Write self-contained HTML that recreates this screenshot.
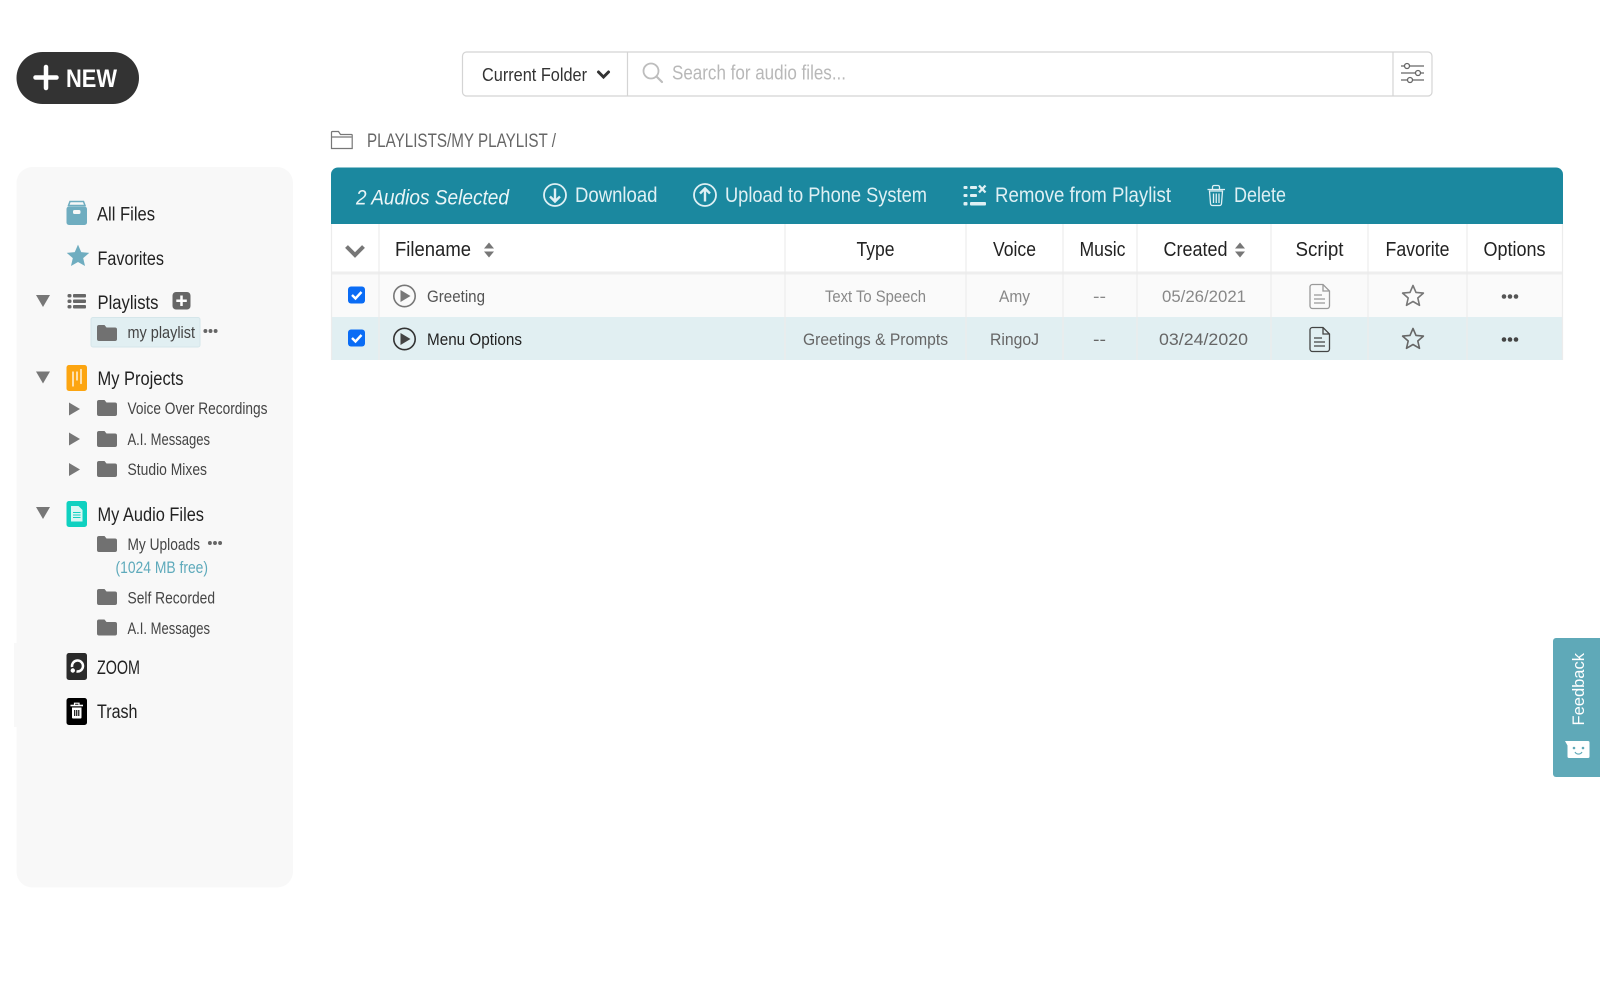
<!DOCTYPE html>
<html lang="en"><head><meta charset="utf-8"><title>Playlists</title>
<style>
html,body{margin:0;padding:0;background:#fff;width:1600px;height:993px;overflow:hidden}
svg{display:block;filter:blur(.35px)}
text{font-family:"Liberation Sans",sans-serif;font-size:19px;fill:#222;white-space:pre}
.s{font-size:16.5px;fill:#444}
.h{font-size:20px;fill:#222}
.b{font-size:21px;fill:#dff0f4}
.c{font-size:17px;fill:#888}
.d{font-size:17px;fill:#666}
</style></head><body>
<svg width="1600" height="993" viewBox="0 0 1600 993" xmlns="http://www.w3.org/2000/svg">
<defs>
<path id="fo" d="M0 2a2 2 0 0 1 2-2h5.500l2 2.500H18a2 2 0 0 1 2 2V14a2 2 0 0 1-2 2H2a2 2 0 0 1-2-2z" fill="#717171"/>
<path id="td" d="M0 0h14L7 12z" fill="#777"/>
<path id="tr" d="M0 0l11 6.500L0 13z" fill="#777"/>
<g id="dots"><circle cx="-6" cy="0" r="2.300"/><circle cx="0" cy="0" r="2.300"/><circle cx="6" cy="0" r="2.300"/></g>
<path id="star" d="M0-10.500l3 6.900 7.400.7-5.600 4.900 1.700 7.300L0 5.500l-6.500 3.800 1.700-7.300-5.600-4.900 7.400-.7z" fill="none" stroke-width="1.600" stroke-linejoin="round"/>
<path id="sort" d="M-5-1.500L0-7.500l5 6zM-5 1.500L0 7.500l5-6z" fill="#777"/>
</defs>

<!-- new button -->
<rect x="16.500" y="52" width="122.500" height="52" rx="26" fill="#333"/>
<path d="M46 67v21M35.500 77.500h21" stroke="#fff" stroke-width="4.500" stroke-linecap="round"/>
<text x="66" y="87" style="font-size:25px;font-weight:700;fill:#fff" textLength="51" lengthAdjust="spacingAndGlyphs">NEW</text>

<!-- sidebar -->
<rect x="16.500" y="167" width="276.500" height="720.500" rx="16" fill="#f8f8f8"/>
<rect x="14" y="643" width="10" height="84" fill="#f8f8f8"/>

<path d="M70 201.500h13.500l1.500 4H68.500z" fill="none" stroke="#6fadc0" stroke-width="1.500"/>
<rect x="66.500" y="206.500" width="20.500" height="18.500" rx="2.500" fill="#6fadc0"/>
<rect x="73" y="210" width="7.500" height="4" rx="1.500" fill="#f8f8f8"/>
<text x="97" y="220.500" textLength="58" lengthAdjust="spacingAndGlyphs">All Files</text>

<path transform="translate(78 256) scale(1.080)" d="M0-10.500l3 6.900 7.400.7-5.600 4.900 1.700 7.300L0 5.500l-6.500 3.800 1.700-7.300-5.600-4.900 7.400-.7z" fill="#6fadc0"/>
<text x="97.500" y="265" textLength="66.500" lengthAdjust="spacingAndGlyphs">Favorites</text>

<use href="#td" x="36" y="295"/>
<g fill="#666"><rect x="67.500" y="294" width="4" height="3.500" rx="1.500"/><rect x="67.500" y="299.500" width="4" height="3.500" rx="1.500"/><rect x="67.500" y="305" width="4" height="3.500" rx="1.500"/><rect x="73" y="294" width="13" height="3.500" rx="1"/><rect x="73" y="299.500" width="13" height="3.500" rx="1"/><rect x="73" y="305" width="13" height="3.500" rx="1"/></g>
<text x="97.500" y="309" textLength="61" lengthAdjust="spacingAndGlyphs">Playlists</text>
<rect x="172.500" y="292" width="18" height="17.500" rx="3.500" fill="#666"/>
<path d="M181.500 295.500v10.500M176.300 300.700h10.500" stroke="#fff" stroke-width="2.500"/>

<rect x="91" y="317.500" width="109" height="29.500" rx="2" fill="#e1eff2" stroke="#d5e6ea"/>
<use href="#fo" x="97" y="325"/>
<text class="s" x="127.500" y="338" textLength="67.500" lengthAdjust="spacingAndGlyphs">my playlist</text>
<use href="#dots" transform="translate(210.500 331) scale(.85)" fill="#666"/>

<use href="#td" x="36" y="371.500"/>
<rect x="66.500" y="365" width="20.500" height="26" rx="2.500" fill="#fca511"/>
<path d="M73 372v14M77 372v8M81 369.500v14" stroke="#fff" stroke-width="1.300" stroke-linecap="round"/>
<text x="97.500" y="385" textLength="86" lengthAdjust="spacingAndGlyphs">My Projects</text>

<use href="#tr" x="69" y="402.500"/><use href="#fo" x="97" y="400"/>
<text class="s" x="127.500" y="414" textLength="140" lengthAdjust="spacingAndGlyphs">Voice Over Recordings</text>
<use href="#tr" x="69" y="432.500"/><use href="#fo" x="97" y="431"/>
<text class="s" x="127.500" y="445" textLength="82.500" lengthAdjust="spacingAndGlyphs">A.I. Messages</text>
<use href="#tr" x="69" y="463"/><use href="#fo" x="97" y="461"/>
<text class="s" x="127.500" y="475" textLength="79.500" lengthAdjust="spacingAndGlyphs">Studio Mixes</text>

<use href="#td" x="36" y="507"/>
<rect x="66.500" y="501" width="20.500" height="26" rx="2.500" fill="#0fd1c0"/>
<path d="M71 506h7.500l4 4v11.500H71z" fill="#d8f7f3"/>
<path d="M73 512.500h7.500M73 515h7.500M73 517.500h7.500" stroke="#0fd1c0" stroke-width="1"/>
<text x="97.500" y="521" textLength="106.500" lengthAdjust="spacingAndGlyphs">My Audio Files</text>

<use href="#fo" x="97" y="536"/>
<text class="s" x="127.500" y="550" textLength="72.500" lengthAdjust="spacingAndGlyphs">My Uploads</text>
<use href="#dots" transform="translate(215 543) scale(.85)" fill="#666"/>
<text x="115.500" y="573" style="font-size:16.500px;fill:#5eaabb" textLength="92.500" lengthAdjust="spacingAndGlyphs">(1024 MB free)</text>
<use href="#fo" x="97" y="589"/>
<text class="s" x="127.500" y="603.500" textLength="87.500" lengthAdjust="spacingAndGlyphs">Self Recorded</text>
<use href="#fo" x="97" y="619.500"/>
<text class="s" x="127.500" y="634" textLength="82.500" lengthAdjust="spacingAndGlyphs">A.I. Messages</text>

<rect x="66.500" y="653" width="20.500" height="27" rx="2.500" fill="#2b2b2b"/>
<path d="M72.100 667A5.500 5.500 0 1 1 76.500 671.400" fill="none" stroke="#fff" stroke-width="2.500"/>
<circle cx="72.800" cy="670.500" r="2.200" fill="#fff"/>
<text x="97" y="674" textLength="43" lengthAdjust="spacingAndGlyphs">ZOOM</text>

<rect x="66.500" y="698" width="20.500" height="27" rx="2.500" fill="#000"/>
<path d="M70.500 705.500h12.500" stroke="#fff" stroke-width="1.600"/><path d="M74.500 705v-1.800h4.500v1.800" stroke="#fff" stroke-width="1.200" fill="none"/>
<path d="M72 707.500h9.500v10a1 1 0 0 1-1 1H73a1 1 0 0 1-1-1z" fill="#fff"/>
<path d="M74.700 710v6M76.750 710v6M78.800 710v6" fill="none" stroke="#000" stroke-width="1.100"/>
<text x="97" y="718" textLength="40.500" lengthAdjust="spacingAndGlyphs">Trash</text>

<!-- search -->
<rect x="462.500" y="52" width="969.500" height="44" rx="4" fill="#fff" stroke="#d4d4d4" stroke-width="1.200"/>
<path d="M627.500 52v44M1393 52v44" stroke="#d4d4d4" stroke-width="1.200"/>
<text x="482" y="81" style="font-size:18.500px;fill:#333" textLength="105" lengthAdjust="spacingAndGlyphs">Current Folder</text>
<path d="M598.500 72l5 5 5-5" fill="none" stroke="#333" stroke-width="3" stroke-linecap="round"/>
<circle cx="651" cy="71" r="7.500" fill="none" stroke="#bdbdbd" stroke-width="1.800"/>
<path d="M656.500 76.500l5.500 5.500" stroke="#bdbdbd" stroke-width="2.200" stroke-linecap="round"/>
<text x="672" y="79.500" style="font-size:20.500px;fill:#b8b8b8" textLength="174" lengthAdjust="spacingAndGlyphs">Search for audio files...</text>
<g fill="none" stroke="#666" stroke-width="1.300"><path d="M1401 66h3.500M1410 66h14M1401 73h14M1420.500 73h3.500M1401 80h6.500M1413 80h11"/><circle cx="1407" cy="66" r="2.500"/><circle cx="1418" cy="73" r="2.500"/><circle cx="1410" cy="80" r="2.500"/></g>

<!-- breadcrumb -->
<path d="M331.500 148.500v-16a1 1 0 0 1 1-1h6l2 3h11a.7.7 0 0 1 .7.700v13.300zM331.500 137h20" fill="none" stroke="#777" stroke-width="1.200"/>
<text x="367" y="147" style="font-size:19px;fill:#666" textLength="189" lengthAdjust="spacingAndGlyphs">PLAYLISTS/MY PLAYLIST /</text>

<!-- toolbar -->
<path d="M331 224v-49.500a7 7 0 0 1 7-7h1218a7 7 0 0 1 7 7V224z" fill="#1b889f"/>
<text x="356" y="204.500" style="font-size:21px;font-style:italic;fill:#eaf5f7" textLength="153" lengthAdjust="spacingAndGlyphs">2 Audios Selected</text>
<g fill="none" stroke="#dff0f4"><circle cx="555" cy="195" r="11" stroke-width="1.800"/><path d="M555 188.500v12.500M550 196.500l5 5 5-5" stroke-width="2.400"/>
<circle cx="705" cy="195" r="11" stroke-width="1.800"/><path d="M705 201.500v-12.500M700 193.500l5-5 5 5" stroke-width="2.400"/></g>
<text class="b" x="575" y="202" textLength="82.500" lengthAdjust="spacingAndGlyphs">Download</text>
<text class="b" x="725" y="202" textLength="202" lengthAdjust="spacingAndGlyphs">Upload to Phone System</text>
<g fill="#dff0f4"><rect x="963.500" y="186" width="4" height="3" rx="1"/><rect x="970" y="186" width="7" height="3" rx="1"/><rect x="963.500" y="194" width="4" height="3" rx="1"/><rect x="970" y="194" width="7" height="3" rx="1"/><rect x="963.500" y="202" width="4" height="3.500" rx="1"/><rect x="970" y="202" width="16" height="3.500" rx="1"/></g>
<path d="M979 185.500l6.500 7M985.500 185.500l-6.500 7" stroke="#dff0f4" stroke-width="2.300"/>
<text class="b" x="995" y="202" textLength="176" lengthAdjust="spacingAndGlyphs">Remove from Playlist</text>
<path d="M1207.500 189.500h17.500M1212.500 189v-2a1.500 1.500 0 0 1 1.500-1.500h4a1.500 1.500 0 0 1 1.500 1.500v2M1209.500 191l1 12.500a2 2 0 0 0 2 2h7a2 2 0 0 0 2-2l1-12.500zM1213.500 193.500v9.500M1216.250 193.500v9.500M1219 193.500v9.500" fill="none" stroke="#dff0f4" stroke-width="1.300"/>
<text class="b" x="1234" y="202" textLength="52" lengthAdjust="spacingAndGlyphs">Delete</text>

<!-- rows -->
<rect x="331" y="274" width="1232" height="43" fill="#fafafa"/>
<rect x="331" y="317" width="1232" height="43" fill="#e1eff2"/>
<rect x="331" y="271.500" width="1232" height="3" fill="#eee"/>
<path d="M331.500 224v136M379 224v136M785 224v136M966 224v136M1063 224v136M1137 224v136M1271 224v136M1368 224v136M1467 224v136M1562.500 224v136" stroke="#ececec" stroke-width="1.200"/>

<path d="M346.500 246.500l8.500 8.500 8.500-8.500" fill="none" stroke="#777" stroke-width="4"/>
<text class="h" x="395" y="256" textLength="76" lengthAdjust="spacingAndGlyphs">Filename</text>
<use href="#sort" x="489" y="250"/>
<text class="h" x="856.500" y="256" textLength="38" lengthAdjust="spacingAndGlyphs">Type</text>
<text class="h" x="993" y="256" textLength="43" lengthAdjust="spacingAndGlyphs">Voice</text>
<text class="h" x="1079.500" y="256" textLength="46" lengthAdjust="spacingAndGlyphs">Music</text>
<text class="h" x="1163.500" y="256" textLength="64" lengthAdjust="spacingAndGlyphs">Created</text>
<use href="#sort" x="1240" y="250"/>
<text class="h" x="1295.500" y="256" textLength="48" lengthAdjust="spacingAndGlyphs">Script</text>
<text class="h" x="1385.500" y="256" textLength="64" lengthAdjust="spacingAndGlyphs">Favorite</text>
<text class="h" x="1483.500" y="256" textLength="62" lengthAdjust="spacingAndGlyphs">Options</text>

<!-- row 1 -->
<rect x="348" y="286.500" width="17" height="17" rx="3" fill="#0a6cf5"/>
<path d="M352 295l3.500 3.500 6-6.500" fill="none" stroke="#fff" stroke-width="2.400"/>
<circle cx="404.500" cy="296" r="10.700" fill="none" stroke="#777" stroke-width="1.600"/>
<path d="M400.500 290l10 6-10 6z" fill="#777"/>
<text x="427" y="302" style="font-size:17px;fill:#555" textLength="58" lengthAdjust="spacingAndGlyphs">Greeting</text>
<text class="c" x="825" y="302" textLength="101" lengthAdjust="spacingAndGlyphs">Text To Speech</text>
<text class="c" x="999" y="302" textLength="31" lengthAdjust="spacingAndGlyphs">Amy</text>
<text class="c" x="1093" y="302" textLength="13" lengthAdjust="spacingAndGlyphs">--</text>
<text class="c" x="1162" y="302" textLength="84" lengthAdjust="spacingAndGlyphs">05/26/2021</text>
<path d="M1312.500 284.500h10.500l6.500 6.500v15a2.500 2.500 0 0 1-2.500 2.500h-14.500a2.500 2.500 0 0 1-2.500-2.500v-19a2.500 2.500 0 0 1 2.500-2.500zM1323 284.500v6.500h6.500M1314 295h8M1314 299h11M1314 303h11" fill="none" stroke="#999" stroke-width="1.300"/>
<use href="#star" x="1413" y="296" stroke="#777"/>
<use href="#dots" x="1510" y="296.500" fill="#555"/>

<!-- row 2 -->
<rect x="348" y="329.500" width="17" height="17" rx="3" fill="#0a6cf5"/>
<path d="M352 338l3.500 3.500 6-6.500" fill="none" stroke="#fff" stroke-width="2.400"/>
<circle cx="404.500" cy="339" r="10.700" fill="none" stroke="#333" stroke-width="1.600"/>
<path d="M400.500 333l10 6-10 6z" fill="#444"/>
<text x="427" y="345" style="font-size:17px;fill:#222" textLength="95" lengthAdjust="spacingAndGlyphs">Menu Options</text>
<text class="d" x="803" y="345" textLength="145" lengthAdjust="spacingAndGlyphs">Greetings &amp; Prompts</text>
<text class="d" x="990" y="345" textLength="49" lengthAdjust="spacingAndGlyphs">RingoJ</text>
<text class="d" x="1093" y="345" textLength="13" lengthAdjust="spacingAndGlyphs">--</text>
<text class="d" x="1159" y="345" textLength="89" lengthAdjust="spacingAndGlyphs">03/24/2020</text>
<path d="M1312.500 327.500h10.500l6.500 6.500v15a2.500 2.500 0 0 1-2.500 2.500h-14.500a2.500 2.500 0 0 1-2.500-2.500v-19a2.500 2.500 0 0 1 2.500-2.500zM1323 327.500v6.500h6.500M1314 338h8M1314 342h11M1314 346h11" fill="none" stroke="#444" stroke-width="1.300"/>
<use href="#star" x="1413" y="339" stroke="#666"/>
<use href="#dots" x="1510" y="339.500" fill="#444"/>

<!-- feedback -->
<path d="M1600 638h-44a3 3 0 0 0-3 3v133a3 3 0 0 0 3 3h44z" fill="#5fa9b8"/>
<text transform="translate(1584 725.500) rotate(-90)" style="font-size:17px;fill:#fff" textLength="72.500" lengthAdjust="spacingAndGlyphs">Feedback</text>
<path d="M1565 741h23a1.500 1.500 0 0 1 1.500 1.500v14a1.500 1.500 0 0 1-1.500 1.500h-19a1.500 1.500 0 0 1-1.500-1.500v-11z" fill="#fff"/>
<circle cx="1574" cy="748" r="1.300" fill="#5fa9b8"/><circle cx="1583" cy="748" r="1.300" fill="#5fa9b8"/>
<path d="M1575 752a4 4 0 0 0 7 0" fill="none" stroke="#5fa9b8" stroke-width="1.200"/>
</svg>
</body></html>
